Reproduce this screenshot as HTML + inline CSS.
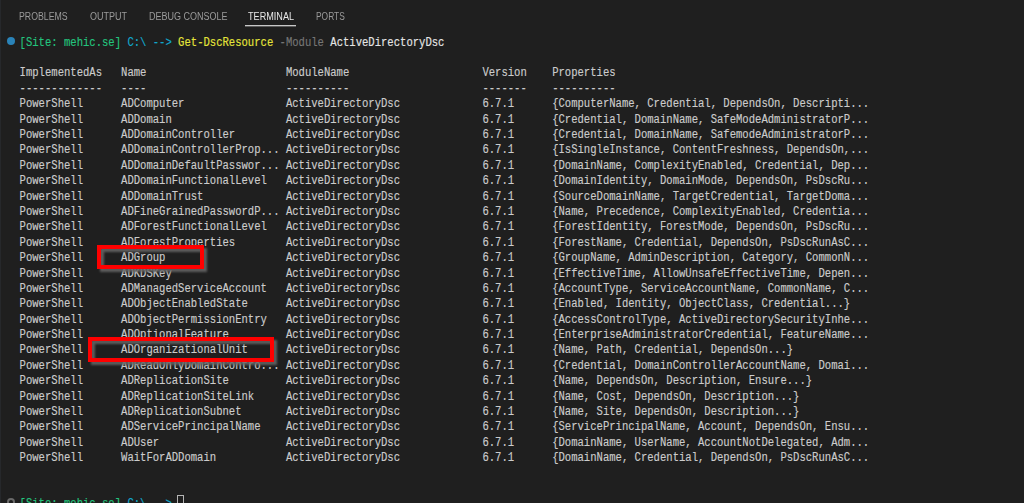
<!DOCTYPE html>
<html><head><meta charset="utf-8"><style>
html,body{margin:0;padding:0;}
body{width:1024px;height:503px;overflow:hidden;background:#1f1f1f;position:relative;}
.edge{position:absolute;left:0;top:0;width:1px;height:503px;background:#26282b;}
.tab{position:absolute;top:9px;font-family:"Liberation Sans",sans-serif;font-size:10px;color:#9a9a9a;line-height:16px;white-space:nowrap;transform-origin:left center;}
.tab.act{color:#e7e7e7;}
.uline{position:absolute;left:245px;top:25px;width:51px;height:1px;background:#c8c8c8;box-shadow:0 1px 0 rgba(140,140,140,0.55);}
.term{position:absolute;left:0;top:0;width:1024px;height:503px;}
.ln{position:absolute;left:19.8px;height:16px;line-height:16px;font-family:"Liberation Mono",monospace;font-size:12.0px;color:#cccccc;white-space:pre;-webkit-text-stroke:0.15px currentColor;transform:translateX(-0.4px) scaleX(0.88042);transform-origin:left top;}
.g{color:#23c47e;} .c{color:#11a8cd;} .y{color:#e5e53a;} .k{color:#767676;} .w{color:#e5e5e5;}
.dot{position:absolute;left:7px;top:37px;width:8px;height:8px;border-radius:50%;background:#2a83b8;}
.dot2{position:absolute;left:7px;top:498px;width:8px;height:8px;border-radius:50%;box-sizing:border-box;border:2px solid #6a6a6a;}
.cur{position:absolute;left:177px;top:495px;width:7px;height:16px;box-sizing:border-box;border:1.5px solid #b4b4b4;}
.box{position:absolute;border:4px solid #ff0000;box-sizing:border-box;filter:drop-shadow(3px 3px 1.2px rgba(100,100,100,0.9));}
</style></head><body>
<div class="edge"></div>
<div class="tab" style="left:19px;transform:scaleX(0.875)">PROBLEMS</div>
<div class="tab" style="left:90px;transform:scaleX(0.90)">OUTPUT</div>
<div class="tab" style="left:149px;transform:scaleX(0.90)">DEBUG CONSOLE</div>
<div class="tab act" style="left:248px;transform:scaleX(0.91)">TERMINAL</div>
<div class="tab" style="left:316px;transform:scaleX(0.84)">PORTS</div>
<div class="uline"></div>
<div class="dot"></div>
<div class="dot2"></div>
<div class="cur"></div>
<div class="term">
<div class="ln" style="top:34.65px"><span class="g">[Site: mehic.se]</span> <span class="c">C:\ --&gt;</span> <span class="y">Get-DscResource</span> <span class="k">-Module</span> <span class="w">ActiveDirectoryDsc</span></div>
<div class="ln" style="top:65.43px">ImplementedAs   Name                      ModuleName                     Version    Properties</div>
<div class="ln" style="top:80.82px">-------------   ----                      ----------                     -------    ----------</div>
<div class="ln" style="top:96.21px">PowerShell      ADComputer                ActiveDirectoryDsc             6.7.1      {ComputerName, Credential, DependsOn, Descripti...</div>
<div class="ln" style="top:111.60px">PowerShell      ADDomain                  ActiveDirectoryDsc             6.7.1      {Credential, DomainName, SafeModeAdministratorP...</div>
<div class="ln" style="top:126.99px">PowerShell      ADDomainController        ActiveDirectoryDsc             6.7.1      {Credential, DomainName, SafemodeAdministratorP...</div>
<div class="ln" style="top:142.38px">PowerShell      ADDomainControllerProp... ActiveDirectoryDsc             6.7.1      {IsSingleInstance, ContentFreshness, DependsOn,...</div>
<div class="ln" style="top:157.77px">PowerShell      ADDomainDefaultPasswor... ActiveDirectoryDsc             6.7.1      {DomainName, ComplexityEnabled, Credential, Dep...</div>
<div class="ln" style="top:173.16px">PowerShell      ADDomainFunctionalLevel   ActiveDirectoryDsc             6.7.1      {DomainIdentity, DomainMode, DependsOn, PsDscRu...</div>
<div class="ln" style="top:188.55px">PowerShell      ADDomainTrust             ActiveDirectoryDsc             6.7.1      {SourceDomainName, TargetCredential, TargetDoma...</div>
<div class="ln" style="top:203.94px">PowerShell      ADFineGrainedPasswordP... ActiveDirectoryDsc             6.7.1      {Name, Precedence, ComplexityEnabled, Credentia...</div>
<div class="ln" style="top:219.33px">PowerShell      ADForestFunctionalLevel   ActiveDirectoryDsc             6.7.1      {ForestIdentity, ForestMode, DependsOn, PsDscRu...</div>
<div class="ln" style="top:234.72px">PowerShell      ADForestProperties        ActiveDirectoryDsc             6.7.1      {ForestName, Credential, DependsOn, PsDscRunAsC...</div>
<div class="ln" style="top:250.11px">PowerShell      ADGroup                   ActiveDirectoryDsc             6.7.1      {GroupName, AdminDescription, Category, CommonN...</div>
<div class="ln" style="top:265.50px">PowerShell      ADKDSKey                  ActiveDirectoryDsc             6.7.1      {EffectiveTime, AllowUnsafeEffectiveTime, Depen...</div>
<div class="ln" style="top:280.89px">PowerShell      ADManagedServiceAccount   ActiveDirectoryDsc             6.7.1      {AccountType, ServiceAccountName, CommonName, C...</div>
<div class="ln" style="top:296.28px">PowerShell      ADObjectEnabledState      ActiveDirectoryDsc             6.7.1      {Enabled, Identity, ObjectClass, Credential...}</div>
<div class="ln" style="top:311.67px">PowerShell      ADObjectPermissionEntry   ActiveDirectoryDsc             6.7.1      {AccessControlType, ActiveDirectorySecurityInhe...</div>
<div class="ln" style="top:327.06px">PowerShell      ADOptionalFeature         ActiveDirectoryDsc             6.7.1      {EnterpriseAdministratorCredential, FeatureName...</div>
<div class="ln" style="top:342.45px">PowerShell      ADOrganizationalUnit      ActiveDirectoryDsc             6.7.1      {Name, Path, Credential, DependsOn...}</div>
<div class="ln" style="top:357.84px">PowerShell      ADReadOnlyDomainContro... ActiveDirectoryDsc             6.7.1      {Credential, DomainControllerAccountName, Domai...</div>
<div class="ln" style="top:373.23px">PowerShell      ADReplicationSite         ActiveDirectoryDsc             6.7.1      {Name, DependsOn, Description, Ensure...}</div>
<div class="ln" style="top:388.62px">PowerShell      ADReplicationSiteLink     ActiveDirectoryDsc             6.7.1      {Name, Cost, DependsOn, Description...}</div>
<div class="ln" style="top:404.01px">PowerShell      ADReplicationSubnet       ActiveDirectoryDsc             6.7.1      {Name, Site, DependsOn, Description...}</div>
<div class="ln" style="top:419.40px">PowerShell      ADServicePrincipalName    ActiveDirectoryDsc             6.7.1      {ServicePrincipalName, Account, DependsOn, Ensu...</div>
<div class="ln" style="top:434.79px">PowerShell      ADUser                    ActiveDirectoryDsc             6.7.1      {DomainName, UserName, AccountNotDelegated, Adm...</div>
<div class="ln" style="top:450.18px">PowerShell      WaitForADDomain           ActiveDirectoryDsc             6.7.1      {DomainName, Credential, DependsOn, PsDscRunAsC...</div>
<div class="ln" style="top:496.35px"><span class="g">[Site: mehic.se]</span> <span class="c">C:\ --&gt;</span></div>
</div>
<div class="box" style="left:97px;top:245px;width:107px;height:24px"></div>
<div class="box" style="left:88px;top:337px;width:186px;height:25px"></div>
</body></html>
